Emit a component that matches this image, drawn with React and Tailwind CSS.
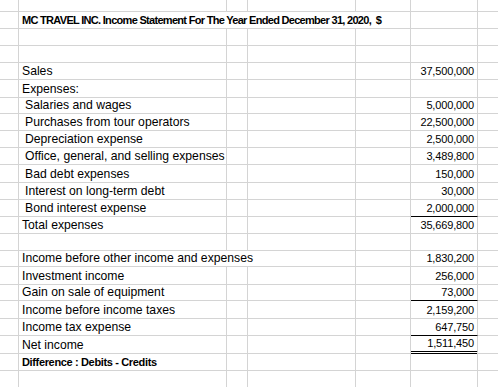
const rows = [
  { h: "h-[12px]" },
  { h: "h-[17px]", title: "MC TRAVEL INC. Income Statement For The Year Ended December 31, 2020,  $" },
  { h: "h-[17px]" },
  { h: "h-[17px]" },
  { h: "h-[17px]", label: "Sales", value: "37,500,000" },
  { h: "h-[18px]", label: "Expenses:" },
  { h: "h-[16px]", label: "Salaries and wages", value: "5,000,000", indent: true },
  { h: "h-[17px]", label: "Purchases from tour operators", value: "22,500,000", indent: true },
  { h: "h-[17px]", label: "Depreciation expense", value: "2,500,000", indent: true },
  { h: "h-[17px]", label: "Office, general, and selling expenses", value: "3,489,800", indent: true },
  { h: "h-[18px]", label: "Bad debt expenses", value: "150,000", indent: true },
  { h: "h-[17px]", label: "Interest on long-term debt", value: "30,000", indent: true },
  { h: "h-[17px]", label: "Bond interest expense", value: "2,000,000", indent: true, line: "single" },
  { h: "h-[17px]", label: "Total expenses", value: "35,669,800" },
  { h: "h-[17px]" },
  { h: "h-[16px]", label: "Income before other income and expenses", value: "1,830,200", wide: true },
  { h: "h-[18px]", label: "Investment income", value: "256,000" },
  { h: "h-[16px]", label: "Gain on sale of equipment", value: "73,000", line: "single" },
  { h: "h-[18px]", label: "Income before income taxes", value: "2,159,200" },
  { h: "h-[17px]", label: "Income tax expense", value: "647,750", line: "single" },
  { h: "h-[17px]", label: "Net income", value: "1,511,450", line: "double" },
  { h: "h-[18px]", bold: "Difference : Debits - Credits" },
  { h: "h-[17px]" },
];

const cell = "border-r border-b border-[#d4d4d4]";

function Row({ r }) {
  let fCell = cell;
  if (r.line === "single") fCell = "border-r border-r-[#d4d4d4] border-b border-b-black";
  if (r.line === "double") fCell = "border-r border-r-[#d4d4d4] border-b-[3px] border-double border-b-black";

  const value = (
    <div className={`${fCell} flex items-end justify-end pr-[3px] pb-[1px] text-[11px] tracking-[-0.15px] leading-[14px]`}>
      {r.value}
    </div>
  );

  return (
    <div className={`grid grid-cols-[19px_208px_21px_108px_55px_67px_1fr] ${r.h}`}>
      <div className={cell}></div>
      {r.title ? (
        <div className={`${cell} col-span-4 flex items-end pl-[3px] pb-[1px] leading-[14px] whitespace-pre font-bold text-[11px] tracking-[-0.7px]`}>
          {r.title}
        </div>
      ) : r.wide ? (
        <>
          <div className={`${cell} col-span-3 flex items-end pl-[3px] pb-[1px] leading-[14px] whitespace-nowrap`}>
            {r.label}
          </div>
          <div className={cell}></div>
        </>
      ) : (
        <>
          <div className={`${cell} flex items-end pb-[1px] leading-[14px] whitespace-nowrap ${r.indent ? "pl-[6px]" : "pl-[3px]"} ${r.bold ? "font-bold text-[11px] tracking-[-0.35px]" : ""}`}>
            {r.label || r.bold}
          </div>
          <div className={cell}></div>
          <div className={cell}></div>
          <div className={cell}></div>
        </>
      )}
      {r.title ? <div className={cell}></div> : value}
      <div className="border-b border-[#d4d4d4]"></div>
    </div>
  );
}

export default function App() {
  return (
    <div className="w-[498px] h-[387px] overflow-hidden bg-white text-black font-['Liberation_Sans',Arial,sans-serif] text-[12.2px]">
      {rows.map((r, i) => (
        <Row key={i} r={r} />
      ))}
    </div>
  );
}
